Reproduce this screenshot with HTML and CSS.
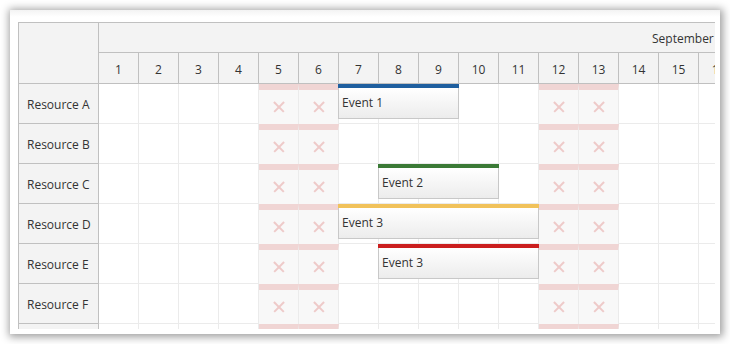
FILE: index.html
```html
<!DOCTYPE html>
<html>
    <head>
        <meta charset="UTF-8">
        <title>Scheduler</title>
        <link rel="stylesheet" href="styles.css">
    </head>
    <body>
        <div class="frame">
        <div class="scheduler">
            <div class="grid">
                <div class="corner"></div>
                <div class="month"><span>September</span></div>
                <div class="day">1</div><div class="day">2</div><div class="day">3</div><div class="day">4</div>
                <div class="day">5</div><div class="day">6</div><div class="day">7</div><div class="day">8</div>
                <div class="day">9</div><div class="day">10</div><div class="day">11</div><div class="day">12</div>
                <div class="day">13</div><div class="day">14</div><div class="day">15</div><div class="day">16</div>

                <div class="res">Resource A</div>
                <div class="cell"></div><div class="cell"></div><div class="cell"></div><div class="cell"></div>
                <div class="cell off"><i></i></div><div class="cell off"><i></i></div>
                <div class="cell"></div><div class="cell"></div><div class="cell"></div><div class="cell"></div><div class="cell"></div>
                <div class="cell off"><i></i></div><div class="cell off"><i></i></div>
                <div class="cell"></div><div class="cell"></div><div class="cell"></div>

                <div class="res">Resource B</div>
                <div class="cell"></div><div class="cell"></div><div class="cell"></div><div class="cell"></div>
                <div class="cell off"><i></i></div><div class="cell off"><i></i></div>
                <div class="cell"></div><div class="cell"></div><div class="cell"></div><div class="cell"></div><div class="cell"></div>
                <div class="cell off"><i></i></div><div class="cell off"><i></i></div>
                <div class="cell"></div><div class="cell"></div><div class="cell"></div>

                <div class="res">Resource C</div>
                <div class="cell"></div><div class="cell"></div><div class="cell"></div><div class="cell"></div>
                <div class="cell off"><i></i></div><div class="cell off"><i></i></div>
                <div class="cell"></div><div class="cell"></div><div class="cell"></div><div class="cell"></div><div class="cell"></div>
                <div class="cell off"><i></i></div><div class="cell off"><i></i></div>
                <div class="cell"></div><div class="cell"></div><div class="cell"></div>

                <div class="res">Resource D</div>
                <div class="cell"></div><div class="cell"></div><div class="cell"></div><div class="cell"></div>
                <div class="cell off"><i></i></div><div class="cell off"><i></i></div>
                <div class="cell"></div><div class="cell"></div><div class="cell"></div><div class="cell"></div><div class="cell"></div>
                <div class="cell off"><i></i></div><div class="cell off"><i></i></div>
                <div class="cell"></div><div class="cell"></div><div class="cell"></div>

                <div class="res">Resource E</div>
                <div class="cell"></div><div class="cell"></div><div class="cell"></div><div class="cell"></div>
                <div class="cell off"><i></i></div><div class="cell off"><i></i></div>
                <div class="cell"></div><div class="cell"></div><div class="cell"></div><div class="cell"></div><div class="cell"></div>
                <div class="cell off"><i></i></div><div class="cell off"><i></i></div>
                <div class="cell"></div><div class="cell"></div><div class="cell"></div>

                <div class="res">Resource F</div>
                <div class="cell"></div><div class="cell"></div><div class="cell"></div><div class="cell"></div>
                <div class="cell off"><i></i></div><div class="cell off"><i></i></div>
                <div class="cell"></div><div class="cell"></div><div class="cell"></div><div class="cell"></div><div class="cell"></div>
                <div class="cell off"><i></i></div><div class="cell off"><i></i></div>
                <div class="cell"></div><div class="cell"></div><div class="cell"></div>

                <div class="res"></div>
                <div class="cell"></div><div class="cell"></div><div class="cell"></div><div class="cell"></div>
                <div class="cell off"><i></i></div><div class="cell off"><i></i></div>
                <div class="cell"></div><div class="cell"></div><div class="cell"></div><div class="cell"></div><div class="cell"></div>
                <div class="cell off"><i></i></div><div class="cell off"><i></i></div>
                <div class="cell"></div><div class="cell"></div><div class="cell"></div>
            </div>

            <div class="event blue" style="left: 319px; top: 61px; width: 121px;">
                <div class="bar"></div><div class="box">Event 1</div>
            </div>
            <div class="event green" style="left: 359px; top: 141px; width: 121px;">
                <div class="bar"></div><div class="box">Event 2</div>
            </div>
            <div class="event yellow" style="left: 319px; top: 181px; width: 201px;">
                <div class="bar"></div><div class="box">Event 3</div>
            </div>
            <div class="event red" style="left: 359px; top: 221px; width: 161px;">
                <div class="bar"></div><div class="box">Event 3</div>
            </div>
        </div>
        </div>
    </body>
</html>
```

FILE: styles.css
```css
body {
    margin: 0;
    background-color: #fff;
    font-family: "Open Sans", "Noto Sans", sans-serif;
    font-size: 12px;
    color: #333;
}
.frame {
    margin: 10px;
    width: 710px;
    height: 324px;
    box-sizing: border-box;
    padding: 12px 5px 5px 8px;
    background: linear-gradient(#f3f3f3, #fff 7px);
    box-shadow: 1px 1px 8px 2px rgba(0, 0, 0, 0.38);
}
.scheduler {
    position: relative;
    width: 697px;
    height: 307px;
    box-sizing: border-box;
    border-left: 1px solid #c0c0c0;
    border-top: 1px solid #c0c0c0;
    overflow: hidden;
    background-color: #fff;
}
.grid {
    display: grid;
    grid-template-columns: 80px repeat(16, 40px);
    grid-template-rows: 30px 31px repeat(7, 40px);
    width: max-content;
}
.corner {
    grid-row: 1 / span 2;
    background-color: #f3f3f3;
    border-right: 1px solid #c0c0c0;
    border-bottom: 1px solid #c0c0c0;
}
.month {
    grid-column: 2 / -1;
    background-color: #f3f3f3;
    border-bottom: 1px solid #c0c0c0;
    padding-left: 553px;
    padding-top: 1px;
    line-height: 29px;
    white-space: nowrap;
}
.day {
    background-color: #f3f3f3;
    border-right: 1px solid #c0c0c0;
    border-bottom: 1px solid #c0c0c0;
    text-align: center;
    padding-top: 1px;
    line-height: 31px;
}
.corner, .month, .day, .res, .cell {
    box-sizing: border-box;
}
.res {
    background-color: #f3f3f3;
    border-right: 1px solid #c0c0c0;
    border-bottom: 1px solid #c0c0c0;
    padding-left: 8px;
    padding-top: 1px;
    line-height: 39px;
}
.cell {
    border-right: 1px solid #ebebeb;
    border-bottom: 1px solid #ebebeb;
}
.cell.off {
    background-color: #f8f8f8;
    border-top: 6px solid #f0d5d4;
    border-bottom: none;
    display: flex;
    align-items: center;
    justify-content: center;
}
.cell.off i {
    position: relative;
    width: 10px;
    height: 10px;
}
.cell.off i::before, .cell.off i::after {
    content: "";
    position: absolute;
    left: -2px;
    top: 4px;
    width: 14px;
    height: 1.6px;
    background-color: #eecac9;
    transform: rotate(45deg);
}
.cell.off i::after {
    transform: rotate(-45deg);
}
.event {
    position: absolute;
    height: 35px;
}
.bar {
    height: 4px;
}
.box {
    height: 31px;
    box-sizing: border-box;
    border: 1px solid #c8c8c8;
    border-top: none;
    background: linear-gradient(#fff, #ececec);
    padding-left: 3px;
    line-height: 29px;
    white-space: nowrap;
}
.blue .bar { background-color: #1f5f9f; }
.green .bar { background-color: #3b7a36; }
.yellow .bar { background-color: #f1c25b; }
.red .bar { background-color: #cb1f1f; }
```
